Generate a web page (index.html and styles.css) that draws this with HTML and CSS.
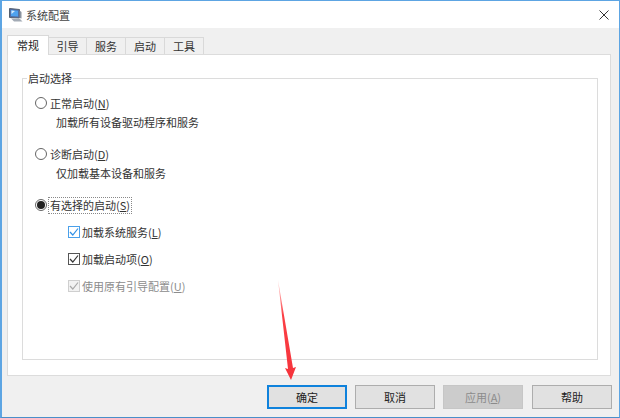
FILE: index.html
```html
<!DOCTYPE html>
<html lang="zh">
<head>
<meta charset="utf-8">
<title>系统配置</title>
<link rel="stylesheet" href="styles.css">
</head>
<body>
<div class="window">
  <header class="titlebar">
    <svg class="app-icon" width="14" height="14" viewBox="0 0 14 14">
      <path d="M0.5 0.5 L10.5 1.5 V10 L0.5 9.5 Z" fill="#4f6fa8" stroke="#55606f" stroke-width="1"/>
      <path d="M2 2 L9 2.8 V8.5 L2 8 Z" fill="#4ea2ee"/>
      <path d="M2.5 2.5 L6 3 L2.5 6 Z" fill="#d5eafc"/>
      <path d="M2 10.5 L11 11 L13.5 13.5 L5 13.5 Z" fill="#a3abb5"/>
      <path d="M10.5 2.5 L12.5 4 V10.5 L10.5 10 Z" fill="#8b94a0"/>
    </svg>
    <span class="title">系统配置</span>
    <svg class="close" width="10" height="10" viewBox="0 0 10 10"><path d="M0.5 0.5 L9.5 9.5 M9.5 0.5 L0.5 9.5" stroke="#333" stroke-width="1" fill="none"/></svg>
  </header>
  <main class="body">
    <nav class="tabs">
      <span class="tab active">常规</span>
      <span class="tab">引导</span>
      <span class="tab wide">服务</span>
      <span class="tab wide">启动</span>
      <span class="tab wide">工具</span>
    </nav>
    <section class="panel">
      <fieldset class="group">
        <legend>启动选择</legend>
        <div class="opt"><i class="radio"></i><span>正常启动(<u>N</u>)</span></div>
        <p class="desc">加载所有设备驱动程序和服务</p>
        <div class="opt gap"><i class="radio"></i><span>诊断启动(<u>D</u>)</span></div>
        <p class="desc">仅加载基本设备和服务</p>
        <div class="opt gap"><i class="radio on"></i><span class="focus">有选择的启动(<u>S</u>)</span></div>
        <div class="check"><i class="box blue"><svg width="12" height="12" viewBox="0 0 12 12"><path d="M2 6 L4.8 9 L10 2.5" fill="none" stroke="#2f8fe6" stroke-width="1.2"/></svg></i><span>加载系统服务(<u>L</u>)</span></div>
        <div class="check"><i class="box"><svg width="12" height="12" viewBox="0 0 12 12"><path d="M2 6 L4.8 9 L10 2.5" fill="none" stroke="#333" stroke-width="1.2"/></svg></i><span>加载启动项(<u>O</u>)</span></div>
        <div class="check disabled"><i class="box"><svg width="12" height="12" viewBox="0 0 12 12"><path d="M2 6 L4.8 9 L10 2.5" fill="none" stroke="#a8a8a8" stroke-width="1.2"/></svg></i><span>使用原有引导配置(<u>U</u>)</span></div>
      </fieldset>
    </section>
    <footer class="buttons">
      <button class="btn primary">确定</button>
      <button class="btn">取消</button>
      <button class="btn off">应用(<u>A</u>)</button>
      <button class="btn help">帮助</button>
    </footer>
  </main>
  <svg class="arrow" width="22" height="104" viewBox="0 0 22 104">
    <defs><linearGradient id="g" x1="0" y1="0" x2="0" y2="1"><stop offset="0" stop-color="#ff7a7a" stop-opacity=".4"/><stop offset=".35" stop-color="#fb3f45"/><stop offset="1" stop-color="#f5333b"/></linearGradient></defs>
    <path d="M1 1 L16 89 L19 88 L14 101 L8 89 L11 90 Z" fill="url(#g)"/>
  </svg>
</div>
</body>
</html>
```
FILE: styles.css
```css
* { box-sizing: border-box; }
html, body { margin: 0; padding: 0; }
body {
  width: 620px;
  height: 418px;
  overflow: hidden;
  font-family: "Noto Sans CJK SC", "Liberation Sans", sans-serif;
  font-size: 11px;
  color: #333;
}
u { text-underline-offset: 1px; }
.window {
  position: relative;
  width: 620px;
  height: 418px;
  border: 1px solid #5da5e3;
  border-left-width: 2px;
  border-bottom-color: #4a8fc9;
  background: #f0f0f0;
  display: flex;
  flex-direction: column;
}
.titlebar {
  height: 27px;
  flex: none;
  background: #fff;
  display: flex;
  align-items: center;
  padding: 0 10px 0 7px;
}
.app-icon { flex: none; }
.title { margin-left: 3px; color: #444; }
.close { margin-left: auto; }
.body {
  flex: 1;
  padding: 8px 0 0 5px;
  display: flex;
  flex-direction: column;
}
.tabs { display: flex; height: 18px; align-items: flex-end; position: relative; z-index: 1; }
.tab {
  height: 17px;
  width: 39px;
  margin-left: -1px;
  border: 1px solid #d9d9d9;
  border-bottom: none;
  background: #f0f0f0;
  text-align: center;
  line-height: 16px;
}
.tab.wide { width: 40px; }
.tab.active {
  height: 20px;
  width: 42px;
  background: #fff;
  margin-left: 0;
  margin-bottom: -1px;
  line-height: 18px;
  color: #222;
}
.panel {
  height: 322px;
  flex: none;
  width: 604px;
  background: #fff;
  border: 1px solid #dcdcdc;
  padding: 15px 12px 0 14px;
}
.group {
  margin: 0;
  height: 290px;
  border: 1px solid #dcdcdc;
  padding: 0 0 0 12px;
  min-width: 0;
}
legend {
  padding: 0 1px;
  margin-left: -8px;
  line-height: 16px;
}
.opt { display: flex; align-items: center; height: 18px; margin-top: 8px; }
.opt span { margin-left: 3px; line-height: 15px; }
.opt.gap { margin-top: 15px; }
.radio {
  width: 12px;
  height: 12px;
  border-radius: 50%;
  border: 1px solid #666;
  background: #fff;
  flex: none;
  display: flex;
  align-items: center;
  justify-content: center;
}
.radio.on::after {
  content: "";
  width: 8px;
  height: 8px;
  border-radius: 50%;
  background: #222;
}
.opt .focus { outline: 1px dotted #888; margin-left: 2px; padding: 0 1px; }
.desc { margin: 2px 0 0 21px; height: 16px; line-height: 16px; }
.check { display: flex; align-items: center; height: 18px; margin: 9px 0 0 33px; }
.check span { margin-left: 2px; }
.box {
  width: 12px;
  height: 12px;
  border: 1px solid #555;
  background: #fff;
  flex: none;
  position: relative;
  display: block;
}
.box svg { position: absolute; left: -1px; top: -1px; }
.box.blue { border-color: #4aa0ea; }
.disabled { color: #8c8c8c; }
.disabled .box { border-color: #cfcfcf; background: #f2f2f2; }
.buttons { display: flex; justify-content: flex-end; gap: 8px; margin-top: 9px; padding-right: 7px; }
.btn {
  width: 80px;
  height: 24px;
  border: 1px solid #adadad;
  background: #e1e1e1;
  font: inherit;
  color: #222;
  padding: 0;
  line-height: 20px;
}
.btn.help { margin-left: 1px; }
.btn.primary { border: 2px solid #0f82dc; }
.btn.off { background: #cccccc; border-color: #c6c6c6; color: #8b8b8b; }
.arrow { position: absolute; left: 275px; top: 278px; }
```
